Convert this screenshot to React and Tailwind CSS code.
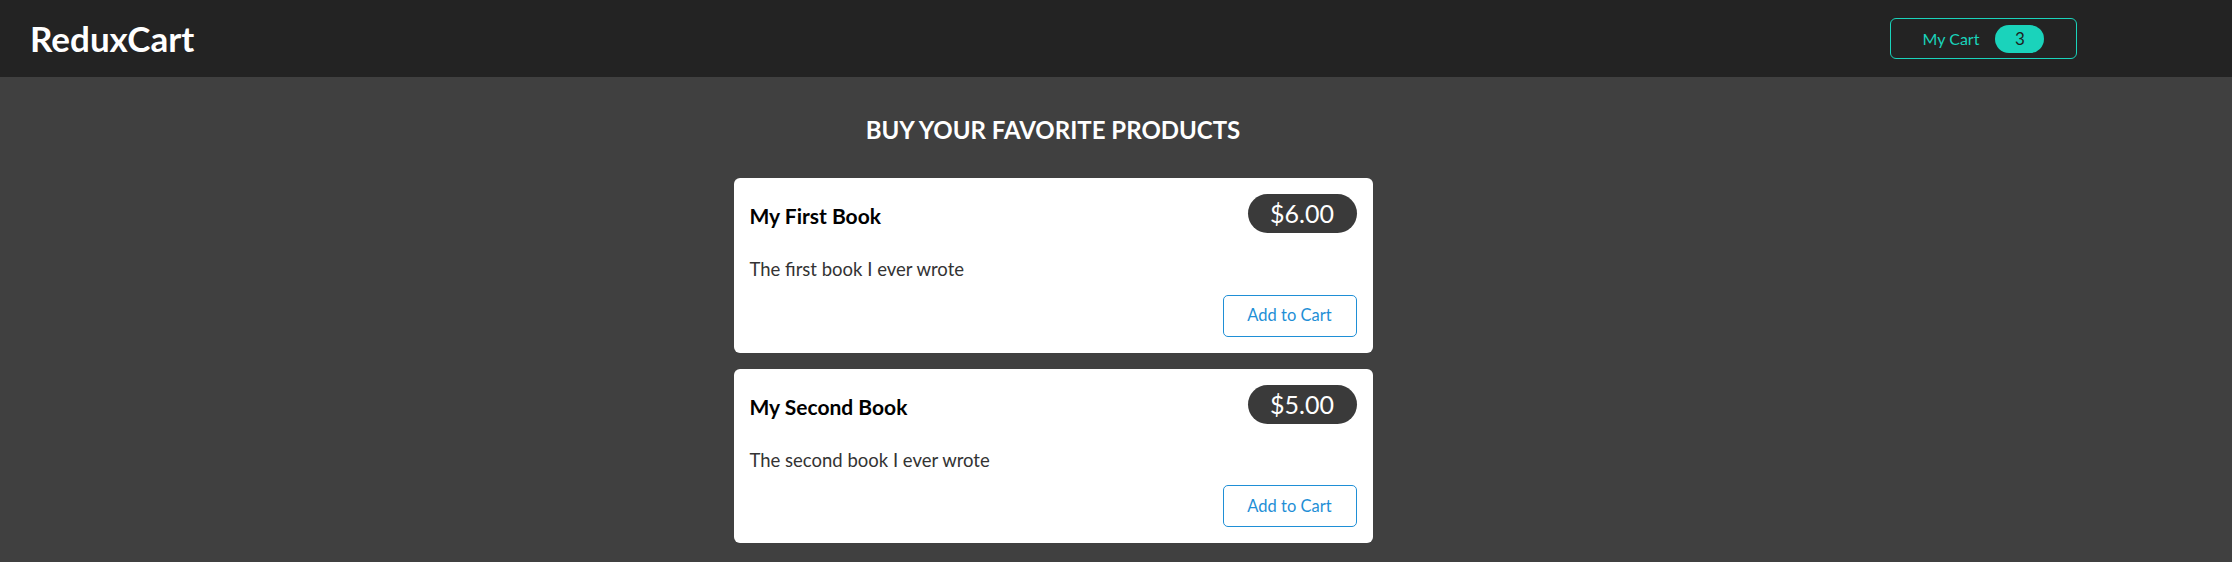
import React from 'react';

const products = [
  { id: 1, title: 'My First Book', price: 6, description: 'The first book I ever wrote' },
  { id: 2, title: 'My Second Book', price: 5, description: 'The second book I ever wrote' },
];

const ProductItem = ({ title, price, description }) => (
  <li className="bg-white rounded-md p-4 flex flex-col">
    <header className="flex items-center justify-between">
      <h3 className="text-[21px] font-bold text-black leading-none pt-[4px]">{title}</h3>
      <div className="bg-[#3a3a3a] text-white text-[25px] leading-none rounded-full h-[39px] w-[109px] flex items-center justify-center">
        ${price.toFixed(2)}
      </div>
    </header>
    <p className="text-[18.5px] text-[#333] mt-[27px] leading-none">{description}</p>
    <div className="flex justify-end mt-[16px]">
      <button className="border border-[#1f8fd6] text-[#1f8fd6] rounded-[5px] h-[42px] w-[134px] text-[16.5px] bg-white">
        Add to Cart
      </button>
    </div>
  </li>
);

export default function App() {
  return (
    <div className="min-h-screen bg-[#404040]" style={{ fontFamily: 'Lato, "Noto Sans", sans-serif' }}>
      <header className="h-[77px] bg-[#232323] flex items-center justify-between pl-[30px] pr-[155px]">
        <h1 className="text-white text-[35px] font-bold leading-none">ReduxCart</h1>
        <button className="border border-[#1ad3bb] rounded-md h-[41px] w-[187px] flex items-center justify-center gap-[16px] text-[#1ad3bb]">
          <span className="text-[16px]">My Cart</span>
          <span className="bg-[#1ad3bb] text-[#1f1f1f] rounded-full w-[49px] h-[28px] flex items-center justify-center text-[17px]">3</span>
        </button>
      </header>
      <main className="flex flex-col items-center pr-[126px]">
        <h2 className="text-white text-[24px] font-bold mt-[41px] leading-none">BUY YOUR FAVORITE PRODUCTS</h2>
        <ul className="w-[639px] mt-[36px] flex flex-col gap-[16px]">
          {products.map((p) => (
            <ProductItem key={p.id} {...p} />
          ))}
        </ul>
      </main>
    </div>
  );
}
